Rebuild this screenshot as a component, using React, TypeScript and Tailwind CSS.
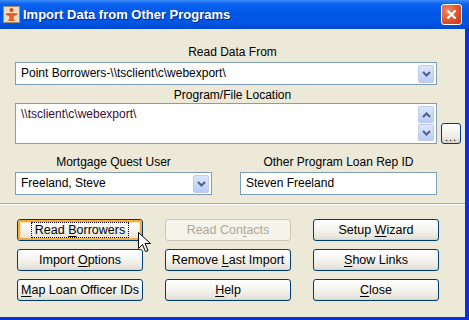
import React from "react";

const font = { fontFamily: '"Liberation Sans", Arial, sans-serif' };

function Btn({
  pre,
  u,
  post,
  focused,
  disabled,
}: {
  pre: string;
  u: string;
  post: string;
  focused?: boolean;
  disabled?: boolean;
}) {
  const border = disabled ? "border-[#c9c7ba]" : "border-[#003c74]";
  const bg = disabled
    ? "bg-[#f5f4ea]"
    : "bg-[linear-gradient(to_bottom,#ffffff_0%,#f4f3ee_50%,#e6e4da_90%,#d6d0c5_100%)]";
  return (
    <div
      className={`w-[126px] h-[22px] rounded-[3px] border ${border} ${bg} flex items-center justify-center`}
    >
      <div
        className={`w-full h-full rounded-[2px] flex items-center justify-center ${
          focused ? "border-2 border-[#f3ac3c] shadow-[inset_0_0_0_1px_#fce2b2]" : ""
        }`}
      >
        <span
          className={`whitespace-nowrap text-[12.5px] leading-[14px] px-[3px] ${
            disabled ? "text-[#aca899]" : "text-black"
          } ${focused ? "outline outline-1 outline-dotted outline-black" : ""}`}
        >
          {pre}
          <span className="underline underline-offset-2">{u}</span>
          {post}
        </span>
      </div>
    </div>
  );
}

function Chevron({ up }: { up?: boolean }) {
  return (
    <svg width="9" height="6" viewBox="0 0 9 6">
      <path
        d={up ? "M1 5 L4.5 1.5 L8 5" : "M1 1 L4.5 4.5 L8 1"}
        fill="none"
        stroke="#4d6185"
        strokeWidth="2"
      />
    </svg>
  );
}

function ArrowBox({ up, h = 18 }: { up?: boolean; h?: number }) {
  return (
    <div
      className="w-[16px] rounded-[2px] border border-[#bccbeb] bg-[linear-gradient(to_bottom,#dce6fd,#b9ccf7)] flex items-center justify-center"
      style={{ height: h }}
    >
      <Chevron up={up} />
    </div>
  );
}

export default function App() {
  return (
    <div className="w-[469px] h-[320px] overflow-hidden flex flex-col bg-[#ece9d8]" style={font}>
      {/* title bar */}
      <div className="h-[29px] shrink-0 flex items-center bg-[linear-gradient(to_bottom,#3c8cf7_0%,#0862ef_14%,#0058e6_45%,#0056e2_80%,#0048cc_100%)] pl-[3px] pr-[7px]">
        <svg width="17" height="17" viewBox="0 0 17 17" className="shrink-0">
          <rect x="0.5" y="0.5" width="16" height="16" fill="#e8dcc4" stroke="#9a8c74" />
          <circle cx="8.5" cy="4" r="2" fill="#d8481a" />
          <path d="M5 7 L12 7 L10.5 12 L12 15 L5 15 L6.5 12 Z" fill="#e8622a" />
          <path d="M3 8 L6 9 M14 8 L11 9" stroke="#c0401a" strokeWidth="1.5" />
        </svg>
        <span className="ml-[3px] text-white font-bold text-[13px] [text-shadow:1px_1px_0_#0a2a8a]">
          Import Data from Other Programs
        </span>
        <div className="ml-auto w-[21px] h-[21px] rounded-[3px] border border-white bg-[radial-gradient(circle_at_30%_30%,#f08a66,#e0512a_55%,#c23a12)] flex items-center justify-center">
          <svg width="11" height="11" viewBox="0 0 11 11">
            <path d="M1.5 1.5 L9.5 9.5 M9.5 1.5 L1.5 9.5" stroke="white" strokeWidth="2.2" />
          </svg>
        </div>
      </div>

      {/* body */}
      <div className="relative flex-1 flex flex-col border-r-[4px] border-b-[3px] border-[#0831d9] text-[12px] text-black">
        <div className="mt-[15px] h-[16px] leading-[16px] text-center">Read Data From</div>
        <div className="ml-[15px] mt-[2px] w-[422px] h-[23px] border border-[#7f9db9] bg-white flex items-center pl-[5px] pr-[2px]">
          <span className="flex-1 leading-[15px]">Point Borrowers-\\tsclient\c\webexport\</span>
          <ArrowBox />
        </div>
        <div className="mt-[2px] h-[16px] leading-[16px] text-center">Program/File Location</div>
        <div className="flex items-end">
          <div className="ml-[15px] w-[422px] h-[41px] border border-[#7f9db9] bg-white flex pl-[5px] pr-[2px] py-[2px]">
            <span className="flex-1 leading-[15px] text-[#3a0a3a] pt-[1px]">\\tsclient\c\webexport\</span>
            <div className="flex flex-col justify-between bg-[#f7f7f3]">
              <ArrowBox up h={17} />
              <ArrowBox h={17} />
            </div>
          </div>
          <div className="ml-[4px] w-[20px] h-[21px] rounded-[3px] border border-[#003c74] bg-[linear-gradient(to_bottom,#ffffff,#ecebe3_70%,#d6d0c5)] flex items-end justify-center pb-[2px]">
            <span className="text-[11px] leading-[8px] tracking-[1px]">...</span>
          </div>
        </div>

        <div className="flex mt-[10px]">
          <div className="ml-[15px] w-[197px] flex flex-col items-center">
            <div className="h-[16px] leading-[16px]">Mortgage Quest User</div>
            <div className="mt-[2px] w-[197px] h-[23px] border border-[#7f9db9] bg-white flex items-center pl-[5px] pr-[2px]">
              <span className="flex-1 leading-[15px]">Freeland, Steve</span>
              <ArrowBox />
            </div>
          </div>
          <div className="ml-[28px] w-[197px] flex flex-col items-center">
            <div className="h-[16px] leading-[16px]">Other Program Loan Rep ID</div>
            <div className="mt-[2px] w-[197px] h-[23px] border border-[#7f9db9] bg-white flex items-center pl-[5px]">
              <span className="leading-[15px]">Steven Freeland</span>
            </div>
          </div>
        </div>

        <div className="mt-[8px] h-[2px] border-t border-[#aca899] border-b border-b-white" />

        <div className="mt-[14px] ml-[17px] grid grid-cols-[126px_126px_126px] gap-x-[22px] gap-y-[8px]">
          <Btn pre="Read " u="B" post="orrowers" focused />
          <Btn pre="Read Con" u="t" post="acts" disabled />
          <Btn pre="Setup " u="W" post="izard" />
          <Btn pre="Import " u="O" post="ptions" />
          <Btn pre="Remove " u="L" post="ast Import" />
          <Btn pre="" u="S" post="how Links" />
          <Btn pre="" u="M" post="ap Loan Officer IDs" />
          <Btn pre="" u="H" post="elp" />
          <Btn pre="" u="C" post="lose" />
        </div>

        {/* mouse pointer */}
        <svg
          className="absolute left-[138px] top-[203px]"
          width="14"
          height="22"
          viewBox="0 0 14 22"
        >
          <path
            d="M0.5 0.5 L0.5 16.5 L4.5 12.5 L7.5 19.5 L10 18.5 L7 11.5 L12.5 11.5 Z"
            fill="white"
            stroke="black"
            strokeWidth="1"
          />
        </svg>
      </div>
    </div>
  );
}
